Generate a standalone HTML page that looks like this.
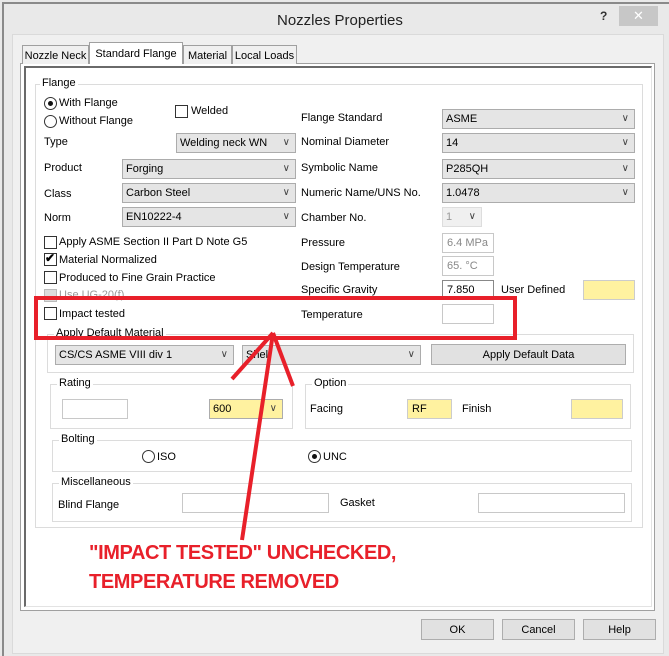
<!DOCTYPE html>
<html><head><style>
*{margin:0;padding:0;box-sizing:border-box}
body{width:669px;height:656px;background:#e9e9e9;font-family:"Liberation Sans",sans-serif;font-size:11px;color:#000;position:relative;overflow:hidden}
.a{position:absolute;white-space:nowrap}
.frame{position:absolute;left:2px;top:2px;width:667px;height:654px;border-left:2px solid #8a8a8a;border-top:2px solid #8a8a8a}
.client{position:absolute;left:12px;top:34px;width:652px;height:620px;background:#f0f0f0;border:1px solid #dadada}
.panel{position:absolute;left:20px;top:63px;width:635px;height:548px;background:#fff;border:1px solid #a0a0a0}
.panel2{position:absolute;left:24px;top:66px;width:628px;height:541px;border-left:2px solid #6a6a6a;border-top:2px solid #6a6a6a;border-right:1px solid #e3e3e3;border-bottom:1px solid #e3e3e3}
.tab{position:absolute;top:45px;height:19px;background:#f0f0f0;border:1px solid #a0a0a0;border-bottom:none;padding:4px 0 0 0;font-size:11px;white-space:nowrap;text-align:center;overflow:hidden}
.grp{position:absolute;border:1px solid #dcdcdc}
.gl{position:absolute;background:#fff;padding:0 2px;top:-8px;left:6px;white-space:nowrap}
.cb{position:absolute;width:13px;height:13px;border:1px solid #333;background:#fff}
.rb{position:absolute;width:13px;height:13px;border:1px solid #333;border-radius:50%;background:#fff}
.rb.on::after{content:"";position:absolute;left:3px;top:3px;width:5px;height:5px;border-radius:50%;background:#111}
.dd{position:absolute;height:20px;background:#e5e5e5;border:1px solid #acacac;padding:3px 0 0 3px;white-space:nowrap}
.dd::after{content:"\2228";position:absolute;right:5px;top:3px;font-size:10px;color:#444}
.tb{position:absolute;height:20px;background:#fff;border:1px solid #c8c8c8;padding:3px 0 0 4px;color:#888;white-space:nowrap}
.btn{position:absolute;height:21px;background:#e1e1e1;border:1px solid #adadad;text-align:center;padding-top:4px}
.y{background:#fff2a0}
.red{color:#e8202a;font-weight:bold;font-size:20px;letter-spacing:-0.4px}
</style></head><body>
<div class="frame"></div>
<div class="a" style="left:277px;top:12px;font-size:15px;color:#222">Nozzles Properties</div>
<div class="a" style="left:600px;top:9px;font-size:12px;font-weight:bold;color:#333">?</div>
<div class="a" style="left:619px;top:6px;width:39px;height:20px;background:#c7c7c7;color:#fff;text-align:center;font-size:13px;padding-top:2px">✕</div>
<div class="client"></div>
<div class="panel"></div>
<div class="panel2"></div>
<div class="tab" style="left:22px;width:67px">Nozzle Neck</div>
<div class="tab" style="left:89px;top:42px;height:22px;width:94px;background:#fff;padding-top:5px">Standard Flange</div>
<div class="tab" style="left:183px;width:49px">Material</div>
<div class="tab" style="left:232px;width:65px">Local Loads</div>

<div class="grp" style="left:35px;top:84px;width:608px;height:444px"><span class="gl" style="left:4px">Flange</span></div>
<div class="rb on" style="left:44px;top:97px"></div><div class="a" style="left:59px;top:97px">With Flange</div>
<div class="rb" style="left:44px;top:115px"></div><div class="a" style="left:59px;top:115px">Without Flange</div>
<div class="cb" style="left:175px;top:105px"></div><div class="a" style="left:191px;top:105px">Welded</div>
<div class="a" style="left:44px;top:136px">Type</div>
<div class="dd" style="left:176px;top:133px;width:120px">Welding neck WN</div>
<div class="a" style="left:44px;top:162px">Product</div>
<div class="dd" style="left:122px;top:159px;width:174px">Forging</div>
<div class="a" style="left:44px;top:188px">Class</div>
<div class="dd" style="left:122px;top:183px;width:174px">Carbon Steel</div>
<div class="a" style="left:44px;top:212px">Norm</div>
<div class="dd" style="left:122px;top:207px;width:174px">EN10222-4</div>

<div class="a" style="left:301px;top:112px">Flange Standard</div>
<div class="dd" style="left:442px;top:109px;width:193px">ASME</div>
<div class="a" style="left:301px;top:136px">Nominal Diameter</div>
<div class="dd" style="left:442px;top:133px;width:193px">14</div>
<div class="a" style="left:301px;top:162px">Symbolic Name</div>
<div class="dd" style="left:442px;top:159px;width:193px">P285QH</div>
<div class="a" style="left:301px;top:187px">Numeric Name/UNS No.</div>
<div class="dd" style="left:442px;top:183px;width:193px">1.0478</div>
<div class="a" style="left:301px;top:212px">Chamber No.</div>
<div class="dd" style="left:442px;top:207px;width:40px;background:#f0f0f0;color:#999;border-color:#ddd">1</div>

<div class="cb" style="left:44px;top:236px"></div><div class="a" style="left:59px;top:236px">Apply ASME Section II Part D Note G5</div>
<div class="cb" style="left:44px;top:253px"></div><div class="a" style="left:45px;top:251px;font-size:12px;font-weight:bold">✔</div><div class="a" style="left:59px;top:254px">Material Normalized</div>
<div class="cb" style="left:44px;top:271px"></div><div class="a" style="left:59px;top:272px">Produced to Fine Grain Practice</div>
<div class="cb" style="left:44px;top:289px;background:#ddd;border-color:#bbb"></div><div class="a" style="left:59px;top:289px;color:#999">Use UG-20(f)</div>
<div class="cb" style="left:44px;top:307px"></div><div class="a" style="left:59px;top:308px">Impact tested</div>

<div class="a" style="left:301px;top:237px">Pressure</div>
<div class="tb" style="left:442px;top:233px;width:52px">6.4 MPa</div>
<div class="a" style="left:301px;top:261px">Design Temperature</div>
<div class="tb" style="left:442px;top:256px;width:52px">65. °C</div>
<div class="a" style="left:301px;top:284px">Specific Gravity</div>
<div class="tb" style="left:442px;top:280px;width:52px;color:#000;border-color:#888">7.850</div>
<div class="a" style="left:501px;top:284px">User Defined</div>
<div class="tb y" style="left:583px;top:280px;width:52px;border-color:#ccc"></div>
<div class="a" style="left:301px;top:309px">Temperature</div>
<div class="tb" style="left:442px;top:304px;width:52px"></div>

<div class="grp" style="left:47px;top:334px;width:587px;height:39px"><span class="gl">Apply Default Material</span></div>
<div class="dd" style="left:55px;top:345px;width:179px">CS/CS ASME VIII div 1</div>
<div class="dd" style="left:242px;top:345px;width:179px">Shell</div>
<div class="btn" style="left:431px;top:344px;width:195px">Apply Default Data</div>

<div class="grp" style="left:50px;top:384px;width:243px;height:45px"><span class="gl">Rating</span></div>
<div class="tb" style="left:62px;top:399px;width:66px"></div>
<div class="dd y" style="left:209px;top:399px;width:74px;background:#fff2a0">600</div>
<div class="grp" style="left:305px;top:384px;width:326px;height:45px"><span class="gl">Option</span></div>
<div class="a" style="left:310px;top:403px">Facing</div>
<div class="tb y" style="left:407px;top:399px;width:45px;color:#000;border-color:#ccc">RF</div>
<div class="a" style="left:462px;top:403px">Finish</div>
<div class="tb y" style="left:571px;top:399px;width:52px;border-color:#ccc"></div>

<div class="grp" style="left:52px;top:440px;width:580px;height:32px"><span class="gl">Bolting</span></div>
<div class="rb" style="left:142px;top:450px"></div><div class="a" style="left:157px;top:451px">ISO</div>
<div class="rb on" style="left:308px;top:450px"></div><div class="a" style="left:323px;top:451px">UNC</div>

<div class="grp" style="left:52px;top:483px;width:580px;height:39px"><span class="gl">Miscellaneous</span></div>
<div class="a" style="left:58px;top:499px">Blind Flange</div>
<div class="tb" style="left:182px;top:493px;width:147px"></div>
<div class="a" style="left:340px;top:497px">Gasket</div>
<div class="tb" style="left:478px;top:493px;width:147px"></div>

<div class="btn" style="left:421px;top:619px;width:73px">OK</div>
<div class="btn" style="left:502px;top:619px;width:73px">Cancel</div>
<div class="btn" style="left:583px;top:619px;width:73px">Help</div>

<svg class="a" style="left:0;top:0" width="669" height="656">
<rect x="36" y="298" width="479" height="40" fill="none" stroke="#e8202a" stroke-width="4"/>
<line x1="242" y1="540" x2="273" y2="333" stroke="#e8202a" stroke-width="4"/>
<line x1="273" y1="333" x2="232" y2="379" stroke="#e8202a" stroke-width="4"/>
<line x1="273" y1="333" x2="293" y2="386" stroke="#e8202a" stroke-width="4"/>
</svg>
<div class="a red" style="left:89px;top:542px">"IMPACT TESTED" UNCHECKED,</div>
<div class="a red" style="left:89px;top:571px">TEMPERATURE REMOVED</div>
</body></html>
